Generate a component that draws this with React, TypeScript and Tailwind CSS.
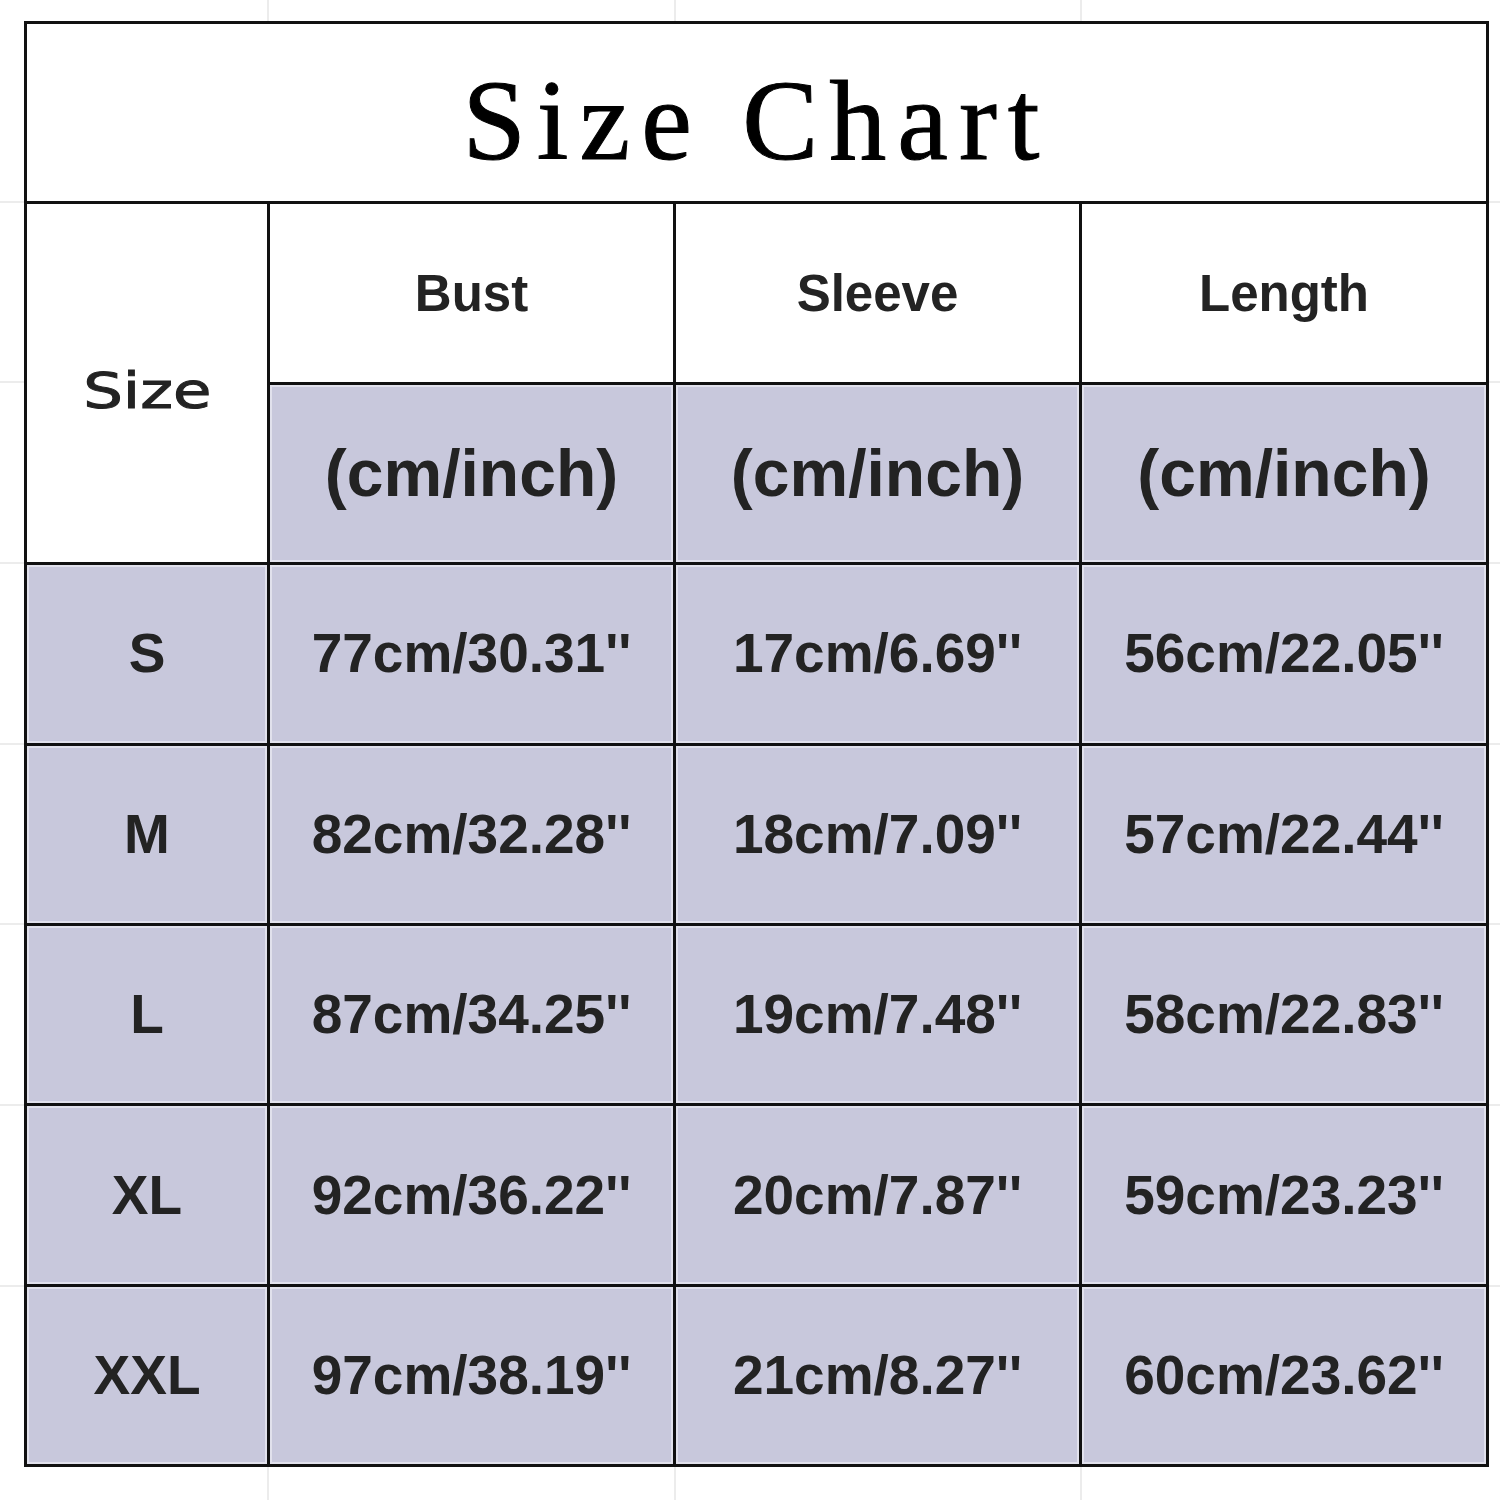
const rows = [
  ["S", "77cm/30.31''", "17cm/6.69''", "56cm/22.05''"],
  ["M", "82cm/32.28''", "18cm/7.09''", "57cm/22.44''"],
  ["L", "87cm/34.25''", "19cm/7.48''", "58cm/22.83''"],
  ["XL", "92cm/36.22''", "20cm/7.87''", "59cm/23.23''"],
  ["XXL", "97cm/38.19''", "21cm/8.27''", "60cm/23.62''"],
];

const headers = ["Bust", "Sleeve", "Length"];

const cell =
  "flex items-center justify-center shadow-[inset_0_0_0_2px_rgba(255,255,255,0.45)]";

export default function App() {
  return (
    <div className="w-[1500px] h-[1500px] bg-white pt-[21px] pl-[24px] bg-[image:linear-gradient(to_right,transparent_267px,#ececec_267px_269px,transparent_269px_674px,#ececec_674px_676px,transparent_676px_1080px,#ececec_1080px_1082px,transparent_1082px),linear-gradient(to_bottom,transparent_201px,#ececec_201px_203px,transparent_203px_381px,#ececec_381px_383px,transparent_383px_562px,#ececec_562px_564px,transparent_564px_743px,#ececec_743px_745px,transparent_745px_923px,#ececec_923px_925px,transparent_925px_1104px,#ececec_1104px_1106px,transparent_1106px_1285px,#ececec_1285px_1287px,transparent_1287px)]">
      <div className="grid w-fit grid-cols-[240px_403px_403px_404px] grid-rows-[repeat(8,177.4px)] gap-[3px] bg-[#111] p-[3px] text-[#232323] font-['Liberation_Sans',Arial,sans-serif]">
        {/* Title */}
        <div className="col-span-4 flex items-center justify-center bg-white pt-4">
          <span className="font-['Liberation_Serif','Times_New_Roman',serif] text-[114px] leading-none tracking-[11px] text-black [-webkit-text-stroke:1px_#000]">
            Size Chart
          </span>
        </div>

        {/* Size label spans both header rows */}
        <div className="row-span-2 flex items-center justify-center bg-white pt-4">
          <span className="inline-block scale-x-125 font-['DejaVu_Sans',sans-serif] text-[50px] leading-none [-webkit-text-stroke:1px_#232323]">
            Size
          </span>
        </div>
        {headers.map((h) => (
          <div key={h} className={`${cell} bg-white`}>
            <span className="text-[51px] font-bold leading-none">{h}</span>
          </div>
        ))}
        {headers.map((h) => (
          <div key={h + "-unit"} className={`${cell} bg-[#c8c8dc]`}>
            <span className="text-[66px] font-bold leading-none">(cm/inch)</span>
          </div>
        ))}

        {/* Data */}
        {rows.map((r) =>
          r.map((v, i) => (
            <div key={r[0] + i} className={`${cell} bg-[#c8c8dc]`}>
              <span className="text-[55px] font-bold leading-none">{v}</span>
            </div>
          ))
        )}
      </div>
    </div>
  );
}
